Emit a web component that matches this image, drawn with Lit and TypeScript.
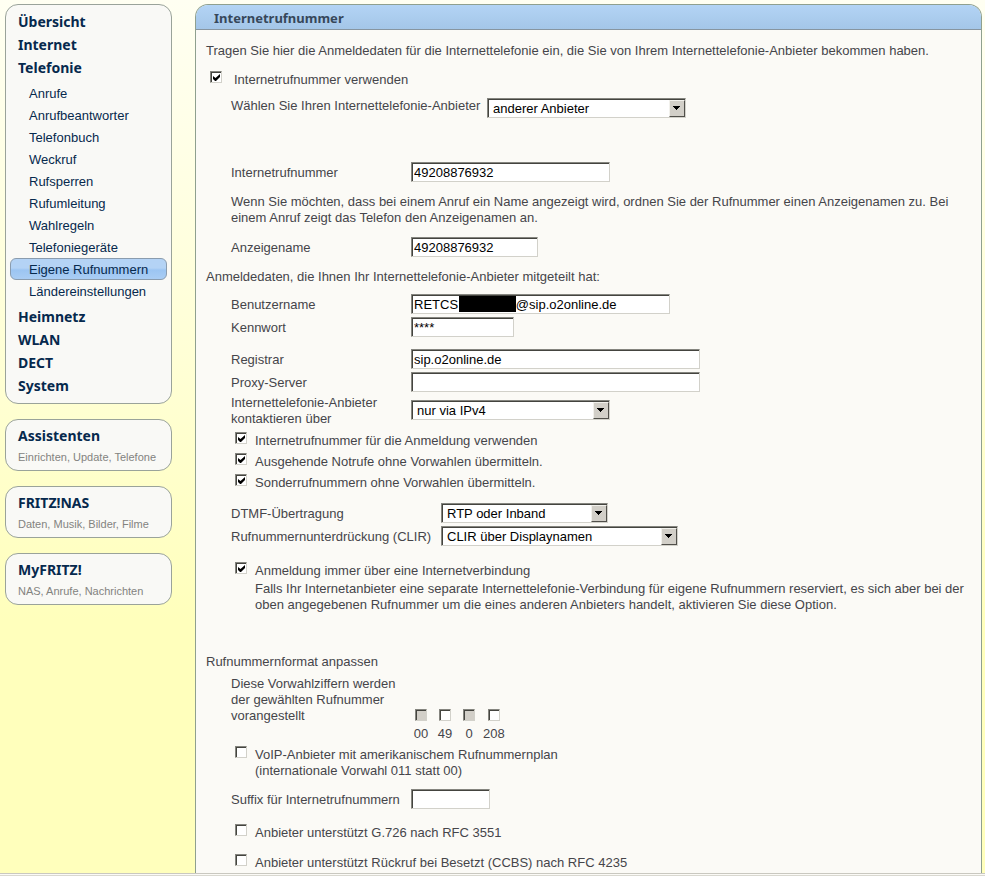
import { LitElement, html, css, nothing } from "lit";
import { customElement, state } from "lit/decorators.js";

const SUB_PAGES = [
  "Anrufe",
  "Anrufbeantworter",
  "Telefonbuch",
  "Weckruf",
  "Rufsperren",
  "Rufumleitung",
  "Wahlregeln",
  "Telefoniegeräte",
  "Eigene Rufnummern",
  "Ländereinstellungen",
];

const SHORTCUTS = [
  { title: "Assistenten", text: "Einrichten, Update, Telefone" },
  { title: "FRITZ!NAS", text: "Daten, Musik, Bilder, Filme" },
  { title: "MyFRITZ!", text: "NAS, Anrufe, Nachrichten" },
];

const PREFIXES = [
  { digits: "00", locked: true },
  { digits: "49", locked: false },
  { digits: "0", locked: true },
  { digits: "208", locked: false },
];

@customElement("side-nav")
export class SideNav extends LitElement {
  @state() private current = "Eigene Rufnummern";

  static styles = css`
    :host {
      display: flex;
      flex-direction: column;
      gap: 15px;
    }
    .card {
      box-sizing: border-box;
      border: 1px solid #9aa39a;
      border-radius: 13px;
      background: #f9f9f6;
    }
    .menu {
      padding: 5px 4px 6px;
    }
    ul {
      list-style: none;
      margin: 0;
      padding: 0;
    }
    a {
      text-decoration: none;
      color: #06294d;
    }
    .main-link {
      display: block;
      padding-left: 8px;
      font: bold 14px/23px "Noto Sans", sans-serif;
    }
    .sub {
      padding: 3px 0;
    }
    .sub-link {
      display: block;
      box-sizing: border-box;
      height: 22px;
      padding: 1px 0 0 18px;
      border: 1px solid transparent;
      border-radius: 6px;
      font-size: 13px;
      line-height: 20px;
    }
    .active {
      border-color: #8a9cae;
      background: linear-gradient(#b4d3f5 0%, #b4d3f5 45%, #9cc5f2 55%, #a9cdf4 100%);
    }
    .shortcut {
      display: flex;
      flex-direction: column;
      gap: 6px;
      padding: 8px 4px 6px 12px;
    }
    .title {
      font: bold 14px/16px "Noto Sans", sans-serif;
    }
    .text {
      font-size: 11px;
      line-height: 14px;
      color: #83837f;
    }
  `;

  private mainLink(name: string) {
    return html`<a class="main-link" href="#">${name}</a>`;
  }

  render() {
    return html`
      <nav class="card menu">
        <ul>
          <li>${this.mainLink("Übersicht")}</li>
          <li>${this.mainLink("Internet")}</li>
          <li>
            ${this.mainLink("Telefonie")}
            <ul class="sub">
              ${SUB_PAGES.map(
                (p) => html`<li>
                  <a
                    class="sub-link ${p === this.current ? "active" : ""}"
                    href="#"
                    @click=${() => (this.current = p)}
                    >${p}</a
                  >
                </li>`
              )}
            </ul>
          </li>
          ${["Heimnetz", "WLAN", "DECT", "System"].map((n) => html`<li>${this.mainLink(n)}</li>`)}
        </ul>
      </nav>
      ${SHORTCUTS.map(
        (s) => html`<a class="card shortcut" href="#">
          <span class="title">${s.title}</span>
          <span class="text">${s.text}</span>
        </a>`
      )}
    `;
  }
}

@customElement("app-root")
export class AppRoot extends LitElement {
  static styles = css`
    :host {
      display: flex;
      flex-direction: column;
      min-height: 100vh;
      box-sizing: border-box;
      font-family: "Liberation Sans", Arial, sans-serif;
      font-size: 13px;
      line-height: 16px;
      color: #45454a;
      background: linear-gradient(#fffff2 0, #ffffd2 400px, #ffffbc 620px);
    }
    .page {
      flex: 1;
      display: grid;
      grid-template-columns: 167px 1fr;
      gap: 23px;
      padding: 4px 3px 0 5px;
    }
    .edge {
      height: 1px;
      border-top: 1px solid #c9c8c0;
      border-bottom: 1px solid #d9d8d0;
      background: #fbfaf6;
    }
    .panel {
      border: 1px solid #8fa08f;
      border-bottom: 0;
      border-radius: 13px 13px 0 0;
      background: #fbfaf6;
      overflow: hidden;
    }
    h1 {
      margin: 0;
      padding: 2px 18px 0;
      border-bottom: 1px solid #8795a0;
      font: bold 13px/22px "Noto Sans", sans-serif;
      color: #36475a;
      background: linear-gradient(#b3d4f5, #a4c6e8);
    }
    form {
      padding: 13px 10px 2px;
    }
    p,
    h2 {
      margin: 0;
      font-size: 13px;
      font-weight: normal;
    }
    .indent {
      margin-left: 25px;
    }
    .fields {
      display: grid;
      row-gap: 3px;
      align-items: center;
      justify-items: start;
    }
    .fields > label {
      padding-top: 2px;
    }
    .narrow {
      grid-template-columns: 180px 1fr;
    }
    .wide {
      grid-template-columns: 210px 1fr;
    }
    .provider {
      grid-template-columns: 256px 1fr;
      align-items: start;
    }
    .provider > label {
      padding-top: 0;
    }
    .text-input {
      box-sizing: border-box;
      height: 20px;
      padding: 1px 2px;
    }
    .text-input,
    .select,
    .check {
      margin: 0;
      border: 1px solid;
      border-color: #85857f #d2d1ca #d2d1ca #85857f;
      border-radius: 0;
      background: #fff;
      box-shadow: inset 1px 1px #44443f;
      outline: 0;
    }
    .text-input,
    .select {
      font: 13px/16px "Liberation Sans", Arial, sans-serif;
      color: #000;
    }
    .w79 {
      width: 79px;
    }
    .w103 {
      width: 103px;
    }
    .w127 {
      width: 127px;
    }
    .w167 {
      width: 167px;
    }
    .w199 {
      width: 199px;
    }
    .w237 {
      width: 237px;
    }
    .w259 {
      width: 259px;
    }
    .w289 {
      width: 289px;
    }
    .redacted,
    .picker {
      position: relative;
      display: block;
    }
    .bar {
      position: absolute;
      left: 48px;
      top: 2px;
      width: 57px;
      height: 16px;
      background: #000;
    }
    .select {
      display: block;
      box-sizing: border-box;
      width: 100%;
      height: 20px;
      padding: 1px 18px 0 5px;
      appearance: none;
    }
    .arrow {
      position: absolute;
      right: 1px;
      top: 2px;
      box-sizing: border-box;
      width: 16px;
      height: 17px;
      border: 1px solid;
      border-color: #f2f1ec #504f4a #504f4a #f2f1ec;
      background: #d2cfc8;
      pointer-events: none;
    }
    .arrow svg {
      display: block;
      margin: 5px 3px;
    }
    .line {
      display: flex;
      align-items: flex-start;
      gap: 8px;
    }
    .line > span {
      padding-top: 1px;
    }
    .tick {
      padding-left: 4px;
    }
    .check {
      flex: none;
      box-sizing: border-box;
      width: 12px;
      height: 12px;
      appearance: none;
    }
    .check:checked::before {
      content: "";
      display: block;
      width: 7px;
      height: 7px;
      margin: 2px;
      background: #000;
      clip-path: polygon(0 29%, 0 72%, 29% 100%, 43% 100%, 100% 43%, 100% 0, 36% 58%);
    }
    .check:disabled {
      background: #d2cfc8;
    }
    .master {
      gap: 12px;
      margin: 12px 0 10px;
    }
    .number {
      margin-top: 44px;
    }
    .para {
      margin-top: 12px;
      margin-bottom: 11px;
    }
    .heading {
      margin: 12px 0 9px;
    }
    .server {
      margin-top: 12px;
    }
    .contact {
      margin-top: 1px;
    }
    .ticks {
      display: grid;
      gap: 4px;
      margin-top: 5px;
      margin-bottom: 12px;
    }
    .always {
      margin-top: 16px;
    }
    .hint {
      margin: 2px 0 0 49px;
    }
    .format {
      margin: 41px 0 6px;
    }
    .prefixes {
      align-self: end;
      display: flex;
      gap: 4px;
      margin: 0 0 -18px;
    }
    .prefix {
      display: flex;
      flex-direction: column;
      align-items: center;
      gap: 5px;
      min-width: 20px;
    }
    .voip {
      margin-top: 22px;
    }
    .suffix {
      margin-top: 10px;
    }
    .codec {
      margin-top: 15px;
    }
    .callback {
      margin-top: 13px;
    }
  `;

  private picker(id: string, value: string, width: string) {
    return html`<span class="picker ${width}">
      <select class="select" id=${id}>
        <option selected>${value}</option>
      </select>
      <span class="arrow"
        ><svg width="8" height="5" viewBox="0 0 8 5" shape-rendering="crispEdges">
          <path d="M0 0h7v1H0zM1 1h5v1H1zM2 2h3v1H2zM3 3h1v1H3z" /></svg
      ></span>
    </span>`;
  }

  private input(id: string, value: string, cls: string) {
    return html`<input class="text-input ${cls}" id=${id} type="text" .value=${value} />`;
  }

  private tick(text: unknown, checked: boolean, cls = "") {
    return html`<label class="line tick ${cls}"
      ><input class="check" type="checkbox" ?checked=${checked} /><span>${text}</span></label
    >`;
  }

  render() {
    const masked = "RETCS" + "\u00a0".repeat(16) + "@sip.o2online.de";
    return html`
      <div class="page">
        <side-nav></side-nav>
        <main class="panel">
          <h1>Internetrufnummer</h1>
          <form>
            <p>
              Tragen Sie hier die Anmeldedaten für die Internettelefonie ein, die Sie von Ihrem
              Internettelefonie-Anbieter bekommen haben.
            </p>
            ${this.tick("Internetrufnummer verwenden", true, "master")}

            <div class="indent fields provider">
              <label for="provider">Wählen Sie Ihren Internettelefonie-Anbieter</label>
              ${this.picker("provider", "anderer Anbieter", "w199")}
            </div>

            <div class="indent fields narrow number">
              <label for="number">Internetrufnummer</label>
              ${this.input("number", "49208876932", "w199")}
            </div>
            <p class="indent para">
              Wenn Sie möchten, dass bei einem Anruf ein Name angezeigt wird, ordnen Sie der
              Rufnummer einen Anzeigenamen zu. Bei einem Anruf zeigt das Telefon den Anzeigenamen
              an.
            </p>
            <div class="indent fields narrow">
              <label for="display">Anzeigename</label>
              ${this.input("display", "49208876932", "w127")}
            </div>

            <h2 class="heading">
              Anmeldedaten, die Ihnen Ihr Internettelefonie-Anbieter mitgeteilt hat:
            </h2>
            <div class="indent fields narrow">
              <label for="user">Benutzername</label>
              <span class="redacted">${this.input("user", masked, "w259")}<span class="bar"></span></span>
              <label for="password">Kennwort</label>
              ${this.input("password", "****", "w103")}
            </div>
            <div class="indent fields narrow server">
              <label for="registrar">Registrar</label>
              ${this.input("registrar", "sip.o2online.de", "w289")}
              <label for="proxy">Proxy-Server</label>
              ${this.input("proxy", "", "w289")}
            </div>
            <div class="indent fields narrow contact">
              <label for="contact">Internettelefonie-Anbieter<br />kontaktieren über</label>
              ${this.picker("contact", "nur via IPv4", "w199")}
            </div>

            <div class="indent ticks">
              ${this.tick("Internetrufnummer für die Anmeldung verwenden", true)}
              ${this.tick("Ausgehende Notrufe ohne Vorwahlen übermitteln.", true)}
              ${this.tick("Sonderrufnummern ohne Vorwahlen übermitteln.", true)}
            </div>

            <div class="indent fields wide">
              <label for="dtmf">DTMF-Übertragung</label>
              ${this.picker("dtmf", "RTP oder Inband", "w167")}
              <label for="clir">Rufnummernunterdrückung (CLIR)</label>
              ${this.picker("clir", "CLIR über Displaynamen", "w237")}
            </div>

            ${this.tick("Anmeldung immer über eine Internetverbindung", true, "indent always")}
            <p class="hint">
              Falls Ihr Internetanbieter eine separate Internettelefonie-Verbindung für eigene
              Rufnummern reserviert, es sich aber bei der oben angegebenen Rufnummer um die eines
              anderen Anbieters handelt, aktivieren Sie diese Option.
            </p>

            <h2 class="format">Rufnummernformat anpassen</h2>
            <div class="indent fields narrow">
              <span>Diese Vorwahlziffern werden<br />der gewählten Rufnummer<br />vorangestellt</span>
              <div class="prefixes">
                ${PREFIXES.map(
                  (p) => html`<label class="prefix"
                    ><input class="check" type="checkbox" ?disabled=${p.locked || nothing} /><span
                      >${p.digits}</span
                    ></label
                  >`
                )}
              </div>
            </div>
            ${this.tick(
              html`VoIP-Anbieter mit amerikanischem Rufnummernplan<br />(internationale Vorwahl 011
                statt 00)`,
              false,
              "indent voip"
            )}
            <div class="indent fields narrow suffix">
              <label for="suffix">Suffix für Internetrufnummern</label>
              ${this.input("suffix", "", "w79")}
            </div>
            ${this.tick("Anbieter unterstützt G.726 nach RFC 3551", false, "indent codec")}
            ${this.tick(
              "Anbieter unterstützt Rückruf bei Besetzt (CCBS) nach RFC 4235",
              false,
              "indent callback"
            )}
          </form>
        </main>
      </div>
      <div class="edge"></div>
    `;
  }
}
